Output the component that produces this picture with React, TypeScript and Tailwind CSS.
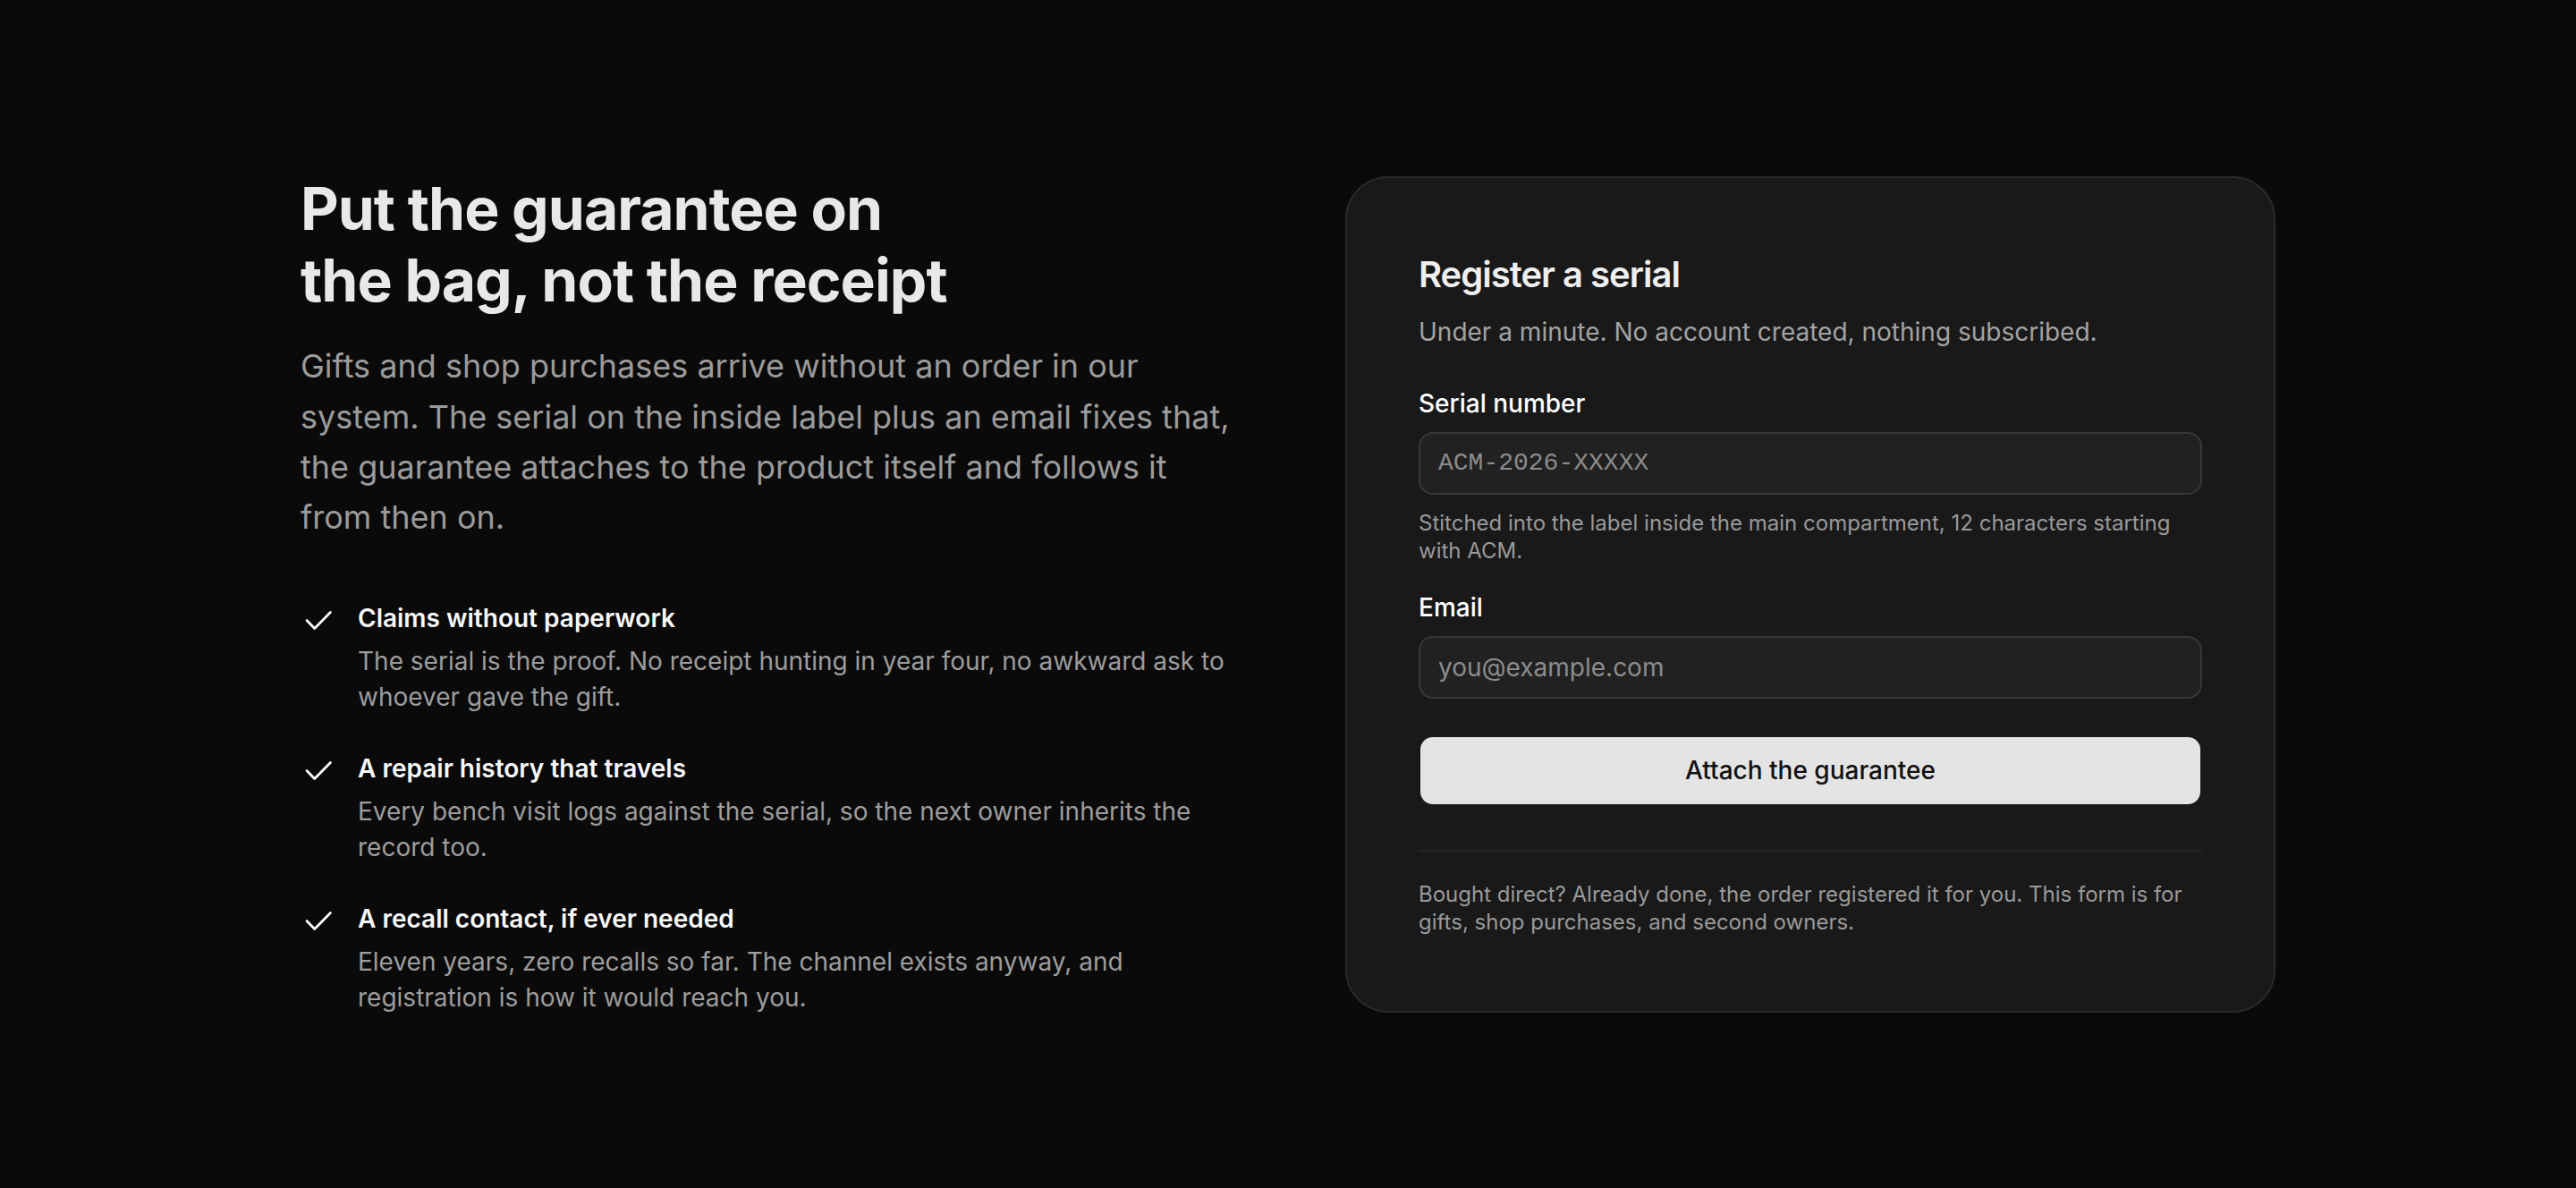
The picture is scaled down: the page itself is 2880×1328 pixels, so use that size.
const perks = [
  {
    title: "Claims without paperwork",
    body: "The serial is the proof. No receipt hunting in year four, no awkward ask to whoever gave the gift.",
  },
  {
    title: "A repair history that travels",
    body: "Every bench visit logs against the serial, so the next owner inherits the record too.",
  },
  {
    title: "A recall contact, if ever needed",
    body: "Eleven years, zero recalls so far. The channel exists anyway, and registration is how it would reach you.",
  },
];

function Tick() {
  return (
    <svg
      width="36"
      height="28"
      viewBox="0 0 36 28"
      fill="none"
      stroke="currentColor"
      strokeWidth="2.7"
      strokeLinecap="round"
      strokeLinejoin="round"
      className="mt-[10px] shrink-0 text-white"
    >
      <path d="M7 12.5 15.7 21.5 33.4 3.5" />
    </svg>
  );
}

export default function App() {
  return (
    <main className="min-h-screen bg-[#0a0a0a] font-['Inter',sans-serif] flex items-center justify-center">
      <div className="grid w-[2208px] grid-cols-2 items-center gap-[128px]">
        {/* Pitch */}
        <div className="flex flex-col">
          <h1 className="text-[66px] leading-[80px] font-bold tracking-[-0.015em] text-[#e8e8e8]">
            Put the guarantee on
            <br />
            the bag, not the receipt
          </h1>
          <p className="mt-[28px] text-[36px] leading-[56.3px] text-[#9b9b9b]">
            Gifts and shop purchases arrive without an order in our system. The serial on the inside label plus an
            email fixes that, the guarantee attaches to the product itself and follows it from then on.
          </p>

          <ul className="mt-[64px] flex flex-col gap-[40px]">
            {perks.map((p) => (
              <li key={p.title} className="flex gap-[28px]">
                <Tick />
                <div className="flex flex-col">
                  <span className="text-[28px] leading-[40px] font-semibold text-[#f7f7f7]">{p.title}</span>
                  <span className="mt-[8px] text-[28px] leading-[40px] text-[#9d9d9d]">{p.body}</span>
                </div>
              </li>
            ))}
          </ul>
        </div>

        {/* Registration form */}
        <div className="rounded-[48px] border-2 border-[#2a2a2a] bg-[#191919] px-[80px] pt-[80px] pb-[84px]">
          <h2 className="text-[40px] leading-[56px] font-semibold tracking-[-0.025em] text-[#efefef]">
            Register a serial
          </h2>
          <p className="mt-[16px] text-[28px] leading-[40px] text-[#a3a3a3]">
            Under a minute. No account created, nothing subscribed.
          </p>

          <form className="mt-[40px] flex flex-col" onSubmit={(e) => e.preventDefault()}>
            <label className="flex flex-col">
              <span className="text-[28px] leading-[40px] font-medium text-white">Serial number</span>
              <input
                type="text"
                placeholder="ACM-2026-XXXXX"
                className="mt-[12px] h-[70px] rounded-[16px] border-2 border-[#383838] bg-[#212121] px-[20px] font-['Liberation_Mono',monospace] text-[28px] text-white outline-none placeholder:text-[#8c8c8c]"
              />
              <span className="mt-[16px] text-[24px] leading-[31px] text-[#9a9a9a]">
                Stitched into the label inside the main compartment, 12 characters starting with ACM.
              </span>
            </label>

            <label className="mt-[28px] flex flex-col">
              <span className="text-[28px] leading-[40px] font-medium text-white">Email</span>
              <input
                type="email"
                placeholder="you@example.com"
                className="mt-[12px] h-[70px] rounded-[16px] border-2 border-[#383838] bg-[#212121] px-[20px] text-[28px] text-white outline-none placeholder:text-[#8c8c8c]"
              />
            </label>

            <button
              type="submit"
              className="mx-[2px] mt-[43px] h-[75px] rounded-[14px] bg-[#e4e4e4] text-[28px] font-medium text-[#111111]"
            >
              Attach the guarantee
            </button>
          </form>

          <div className="mt-[51px] border-t-2 border-[#262626] pt-[32px]">
            <p className="text-[24px] leading-[31px] text-[#9a9a9a]">
              Bought direct? Already done, the order registered it for you. This form is for gifts, shop purchases, and
              second owners.
            </p>
          </div>
        </div>
      </div>
    </main>
  );
}
